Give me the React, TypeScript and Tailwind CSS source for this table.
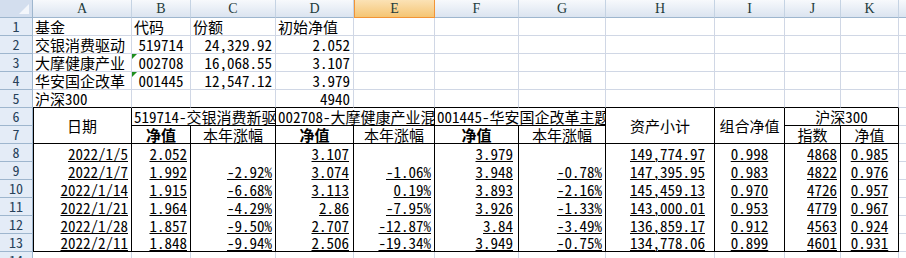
import React from "react";

const FONT = '"Noto Sans Mono CJK SC","Noto Sans CJK SC","DejaVu Sans Mono",monospace';

type CP = { children?: React.ReactNode; className?: string; mid?: boolean };

function C({ children, className = "", mid = false }: CP) {
  return (
    <div
      className={`relative flex ${mid ? "items-center" : "items-end"} overflow-hidden whitespace-nowrap px-[2px] text-[15px] leading-[17px] text-black ${className}`}
    >
      {children}
    </div>
  );
}

const G = "border-r border-b border-r-[#d0d7e5] border-b-[#d0d7e5]";
const COLS = ["A", "B", "C", "D", "E", "F", "G", "H", "I", "J", "K", ""];

function Tri() {
  return (
    <span className="absolute left-0 top-0 h-0 w-0 border-t-[5px] border-r-[5px] border-t-[#1f8f1f] border-r-transparent" />
  );
}

function RowHead({ n }: { n: number | string }) {
  return (
    <div className="flex items-center justify-center border-r border-b border-r-[#9eb6ce] border-b-[#9eb6ce] bg-[#e4ecf7] text-[14px] leading-[17px] text-[#27415a]">
      {n}
    </div>
  );
}

function U({ children }: { children: React.ReactNode }) {
  return <span className="underline decoration-1 underline-offset-[1px]">{children}</span>;
}

const data: string[][] = [
  ["2022/1/5", "2.052", "", "3.107", "", "3.979", "", "149,774.97", "0.998", "4868", "0.985"],
  ["2022/1/7", "1.992", "-2.92%", "3.074", "-1.06%", "3.948", "-0.78%", "147,395.95", "0.983", "4822", "0.976"],
  ["2022/1/14", "1.915", "-6.68%", "3.113", "0.19%", "3.893", "-2.16%", "145,459.13", "0.970", "4726", "0.957"],
  ["2022/1/21", "1.964", "-4.29%", "2.86", "-7.95%", "3.926", "-1.33%", "143,000.01", "0.953", "4779", "0.967"],
  ["2022/1/28", "1.857", "-9.50%", "2.707", "-12.87%", "3.84", "-3.49%", "136,859.17", "0.912", "4563", "0.924"],
  ["2022/2/11", "1.848", "-9.94%", "2.506", "-19.34%", "3.949", "-0.75%", "134,778.06", "0.899", "4601", "0.931"],
];

const dataAlign = [
  "justify-end pr-[3px]",
  "justify-end pr-[3px]",
  "justify-end pr-[3px]",
  "justify-end pr-[4px]",
  "justify-end pr-[3px]",
  "justify-end pr-[5px]",
  "justify-end pr-[3px]",
  "justify-end pr-[9px]",
  "justify-center",
  "justify-end pr-[3px]",
  "justify-center",
];

export default function App() {
  const top5: { a: string; b: string; c: string; d: string; tri?: boolean }[] = [
    { a: "基金", b: "代码", c: "份额", d: "初始净值" },
    { a: "交银消费驱动", b: "519714", c: "24,329.92", d: "2.052" },
    { a: "大摩健康产业", b: "002708", c: "16,068.55", d: "3.107", tri: true },
    { a: "华安国企改革", b: "001445", c: "12,547.12", d: "3.979", tri: true },
    { a: "沪深300", b: "", c: "", d: "4940" },
  ];

  const B = "border-r border-r-black";
  const BB = "border-r border-b border-r-black border-b-black";

  return (
    <div className="h-[258px] w-[906px] overflow-hidden bg-white" style={{ fontFamily: FONT }}>
      <div className="grid grid-cols-[33px_99px_59px_85px_78px_81px_84px_87px_109px_70px_56px_58px_20px] grid-rows-[18px_repeat(14,18px)]">
        {/* corner */}
        <div className="relative border-r border-b border-r-[#9eb6ce] border-b-[#9eb6ce] bg-[#d3deee]">
          <span className="absolute bottom-[3px] right-[3px] h-0 w-0 border-b-[10px] border-l-[10px] border-b-[#f3f6fb] border-l-transparent" />
        </div>
        {COLS.map((c, i) =>
          c === "E" ? (
            <div
              key={i}
              className="flex items-center justify-center border-x border-b border-[#f29436] bg-gradient-to-b from-[#fbe2b5] to-[#f5c572] text-[14px] leading-[17px] text-[#1e3b3b]"
              style={{ fontFamily: '"Liberation Serif","DejaVu Serif",serif' }}
            >
              {c}
            </div>
          ) : (
            <div
              key={i}
              className="flex items-center justify-center border-r border-b border-r-[#c5d3e3] border-b-[#9eb6ce] bg-gradient-to-b from-[#f7f9fc] to-[#dbe4f0] text-[14px] leading-[17px] text-[#1e3b3b]"
              style={{ fontFamily: '"Liberation Serif","DejaVu Serif",serif' }}
            >
              {c}
            </div>
          )
        )}

        {/* rows 1-5 */}
        {top5.map((r, i) => {
          const last = i === 4;
          const cls = last ? "border-r border-b border-r-[#d0d7e5] border-b-black" : G;
          return (
            <React.Fragment key={i}>
              <RowHead n={i + 1} />
              <C className={cls}>{r.a}</C>
              <C className={`${cls} ${i === 0 ? "" : "justify-center"}`}>
                {r.tri && <Tri />}
                {r.b}
              </C>
              <C className={`${cls} ${i === 0 ? "" : "justify-end pr-[3px]"}`}>{r.c}</C>
              <C className={`${cls} ${i === 0 ? "" : "justify-end pr-[3px]"}`}>{r.d}</C>
              {Array.from({ length: 7 }).map((_, k) => (
                <C key={k} className={cls} />
              ))}
              <C className={G} />
            </React.Fragment>
          );
        })}

        {/* rows 6-7 header */}
        <RowHead n={6} />
        <C mid className={`${BB} row-span-2 justify-center shadow-[inset_1px_0_0_#000]`}>日期</C>
        <C className={`${BB} col-span-2`}>519714-交银消费新驱动</C>
        <C className={`${BB} col-span-2`}>002708-大摩健康产业混合</C>
        <C className={`${BB} col-span-2`}>001445-华安国企改革主题</C>
        <C mid className={`${BB} row-span-2 justify-center`}>资产小计</C>
        <C mid className={`${BB} row-span-2 justify-center`}>组合净值</C>
        <C className={`${BB} col-span-2 justify-center`}>沪深300</C>
        <C className={G} />

        <RowHead n={7} />
        <C className={`${BB} justify-center font-bold`}>净值</C>
        <C className={`${BB} justify-center`}>本年涨幅</C>
        <C className={`${BB} justify-center font-bold`}>净值</C>
        <C className={`${BB} justify-center`}>本年涨幅</C>
        <C className={`${BB} justify-center font-bold`}>净值</C>
        <C className={`${BB} justify-center`}>本年涨幅</C>
        <C className={`${BB} justify-center`}>指数</C>
        <C className={`${BB} justify-center`}>净值</C>
        <C className={G} />

        {/* data rows */}
        {data.map((row, ri) => {
          const lastRow = ri === data.length - 1;
          const base = lastRow ? BB : B;
          return (
            <React.Fragment key={ri}>
              <RowHead n={ri + 8} />
              {row.map((v, ci) => (
                <C
                  key={ci}
                  className={`${base} ${dataAlign[ci]} ${ci === 0 ? "shadow-[inset_1px_0_0_#000]" : ""}`}
                >
                  {v && <U>{v}</U>}
                </C>
              ))}
              <C className={G} />
            </React.Fragment>
          );
        })}

        {/* row 14 partial */}
        <RowHead n={14} />
        {Array.from({ length: 12 }).map((_, k) => (
          <C key={k} className={G} />
        ))}
      </div>
    </div>
  );
}
